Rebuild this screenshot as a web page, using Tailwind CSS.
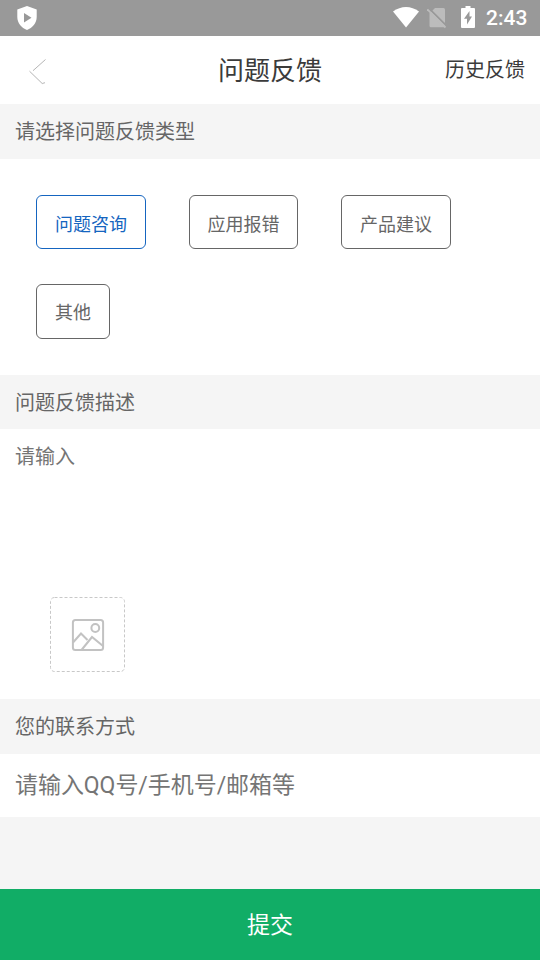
<!DOCTYPE html>
<html lang="zh-CN">
<head>
<meta charset="utf-8">
<title>问题反馈</title>
<script src="https://cdn.jsdelivr.net/npm/@tailwindcss/browser@4"></script>
</head>
<body class="bg-[#f5f5f5]">
<div class="flex flex-col w-[540px] h-[960px] overflow-hidden bg-[#f5f5f5] text-[#666] font-['Roboto','Noto_Sans_CJK_SC',sans-serif]">
  <div class="flex h-9 shrink-0 items-center bg-[#999] pl-[17px] pr-3 text-white">
    <svg class="w-5 h-6" viewBox="0 0 20 24" fill="#fff"><path fill-rule="evenodd" d="M10 0 19.700 3.400V11C19.700 17 15.500 22 10 24 4.500 22 .3 17 .3 11V3.400ZM7 7v9.500l7.500-4.800Z"/></svg>
    <svg class="w-[26px] h-[22px] ml-auto" viewBox="0 0 26 22" fill="#fff"><path d="M0 4.500C8-1.500 18-1.500 26 4.500L13 20.500Z"/></svg>
    <svg class="w-5 h-[22px] ml-[8px]" viewBox="0 0 20 22"><path fill="#bcbcbc" d="M8 1h8.500A1.500 1.500 0 0 1 18 2.500V18.800a1.500 1.500 0 0 1-1.500 1.500H4A1.500 1.500 0 0 1 2.500 18.800V6.500Z"/><path d="M1.500 .8 20 19.300" stroke="#999" stroke-width="1.700"/><path d="M.3 2.300 18.500 20.500" stroke="#bcbcbc" stroke-width="1.900"/></svg>
    <svg class="w-[14px] h-[22px] ml-[14px] -mt-[2px]" viewBox="0 0 14 22"><path fill="#fff" fill-rule="evenodd" d="M4.500 0h5v2H13a1 1 0 0 1 1 1v18a1 1 0 0 1-1 1H1a1 1 0 0 1-1-1V3a1 1 0 0 1 1-1h3.500ZM8.500 5 3 12.800h3V18.500L11 10.500H8.500Z"/></svg>
    <span class="ml-[11px] w-[42px] text-[21px] leading-[38px] font-medium whitespace-nowrap">2:43</span>
  </div>
  <header class="grid grid-cols-[1fr_auto_1fr] h-[68px] shrink-0 items-center bg-white px-[15px] text-[#3b3b3b]">
    <svg class="w-[18px] h-[28px] ml-[13px] mt-[4px]" viewBox="0 0 18 28" fill="none" stroke="#b5b5b5" stroke-width="1"><path d="M17.500 1.500 5 12.700M1.500 13.200 14.200 25.500 17 24.700"/></svg>
    <h1 class="h-[68px] text-[26px] leading-[71px]">问题反馈</h1>
    <span class="h-[68px] justify-self-end text-[20px] leading-[69px]">历史反馈</span>
  </header>
  <h2 class="h-[55px] shrink-0 px-[15px] text-[20px] leading-[56px]">请选择问题反馈类型</h2>
  <div class="flex flex-wrap content-start gap-x-[43px] gap-y-[35px] h-[216px] shrink-0 bg-white pl-9 pt-9 text-[18px] leading-[52px]">
    <button class="h-[54px] w-[110px] rounded-[6px] border border-[#1565c0] pt-[3px] text-[#1565c0]">问题咨询</button>
    <button class="h-[54px] w-[109px] rounded-[6px] border border-[#666] pt-[3px]">应用报错</button>
    <button class="h-[54px] w-[110px] rounded-[6px] border border-[#666] pt-[3px]">产品建议</button>
    <button class="h-[55px] w-[74px] rounded-[6px] border border-[#666] pt-[2px]">其他</button>
  </div>
  <h2 class="h-[54px] shrink-0 px-[15px] text-[20px] leading-[56px]">问题反馈描述</h2>
  <div class="flex flex-col h-[270px] shrink-0 bg-white text-[#757575]">
    <p class="h-[168px] px-[15px] text-[20px] leading-[56px]">请输入</p>
    <div class="ml-[50px] flex w-[75px] h-[75px] items-center justify-center rounded-[4px]">
      <svg class="w-[75px] h-[75px]" viewBox="0 0 75 75" fill="none" stroke="#c2c2c2"><rect x=".5" y=".5" width="74" height="74" rx="4" stroke-dasharray="3 2" stroke="#c8c8c8"/><g stroke-width="2"><rect x="22.900" y="22.900" width="30.200" height="30.200" rx="2.500"/><circle cx="45.300" cy="31" r="3.900"/><path d="M23 45.500 31 36.500 37.500 43M31.500 53 42 40 53 49"/></g></svg>
    </div>
  </div>
  <h2 class="h-[55px] shrink-0 px-[15px] text-[20px] leading-[56px]">您的联系方式</h2>
  <p class="h-[63px] shrink-0 bg-white px-[15px] text-[23px] leading-[64px] tracking-[-0.05px] text-[#757575]">请输入QQ号/手机号/邮箱等</p>
  <button class="mt-auto h-[71px] shrink-0 bg-[#11ad66] pt-[3px] text-[23px] leading-[68px] text-white">提交</button>
</div>
</body>
</html>
